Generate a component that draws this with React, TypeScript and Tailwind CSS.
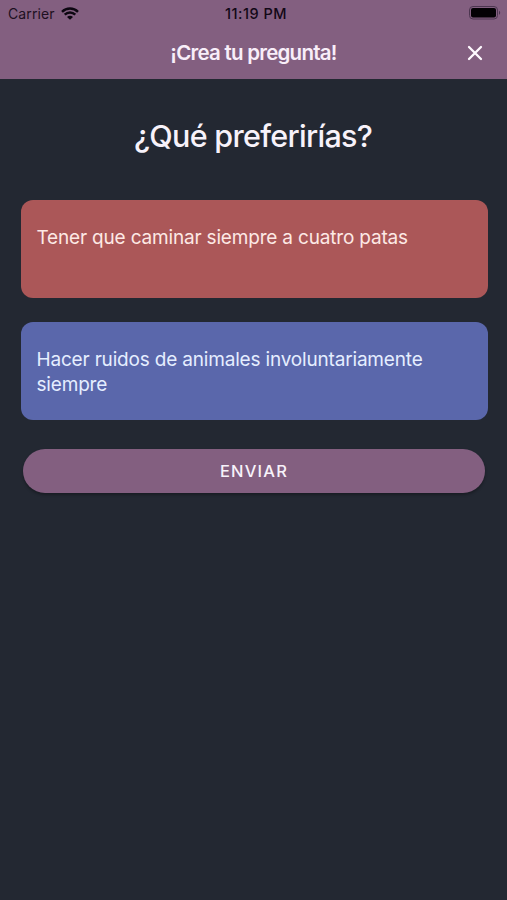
import React from "react";

function WifiIcon() {
  return (
    <svg width="18" height="13" viewBox="0 0 18 13" fill="none" stroke="#0d0711" strokeWidth="2.4">
      <path d="M1 4.8C5.4 0.4 12.6 0.4 17 4.8" />
      <path d="M3.7 7.7C6.7 4.8 11.3 4.8 14.3 7.7" />
      <path d="M6 9.9C7.7 8.4 10.3 8.4 12 9.9L9 12.8Z" fill="#0d0711" stroke="none" />
    </svg>
  );
}

function BatteryIcon() {
  return (
    <svg width="33" height="14" viewBox="0 0 33 14" fill="none">
      <rect x="0.5" y="0.5" width="28" height="12.5" rx="3.5" stroke="#4c3650" />
      <rect x="2" y="2" width="25" height="9.5" rx="2" fill="#030104" />
      <path d="M30 4.7C31.6 5.2 31.6 8.2 30 8.7Z" fill="#4c3650" />
    </svg>
  );
}

function StatusBar() {
  return (
    <div className="grid h-[27px] grid-cols-3 items-center pl-[8px] pr-[5px] text-[#1d1021]">
      <div className="flex items-center gap-[6.5px]">
        <span className="text-[14px] leading-[27px] tracking-[0.1px]">Carrier</span>
        <WifiIcon />
      </div>
      <span className="pl-[2px] text-center text-[14.5px] font-medium leading-[27px] tracking-[0.5px] text-[#120816]">
        11:19 PM
      </span>
      <div className="flex justify-end pb-px">
        <BatteryIcon />
      </div>
    </div>
  );
}

function Option({ text, tone }: { text: string; tone: string }) {
  return (
    <div className={`h-[98px] rounded-[12px] pl-4 pr-8 pt-[26px] text-[19px] leading-[24.5px] tracking-[-0.18px] ${tone}`}>
      {text}
    </div>
  );
}

export default function App() {
  return (
    <div className="flex h-[900px] w-[507px] flex-col overflow-hidden bg-[#232832] font-['Inter',sans-serif] text-[#f7f2fa]">
      <header className="h-[79px] bg-[#835f80]">
        <StatusBar />
        <div className="grid h-[52px] grid-cols-[60px_1fr_60px] items-center">
          <h1 className="col-start-2 text-center text-[20.5px] font-semibold leading-[24px] tracking-[-0.75px] text-[#f8eef9]">
            ¡Crea tu pregunta!
          </h1>
          <button className="flex justify-center pr-[5px]" aria-label="Cerrar">
            <svg width="16" height="16" viewBox="0 0 16 16" stroke="#fffaff" strokeWidth="2.3" strokeLinecap="round">
              <path d="M2 2L14 14M14 2L2 14" />
            </svg>
          </button>
        </div>
      </header>
      <main className="flex flex-col pl-[20.5px] pr-[19.5px] pt-[37px]">
        <h2 className="mb-[43px] pb-[2px] pr-[2px] text-center text-[30.5px] font-medium leading-[39px] tracking-[-0.7px]">
          ¿Qué preferirías?
        </h2>
        <div className="flex flex-col gap-6">
          <Option text="Tener que caminar siempre a cuatro patas" tone="bg-[#ab5758] text-[#fde9e5]" />
          <Option text="Hacer ruidos de animales involuntariamente siempre" tone="bg-[#5a67ab] text-[#e5eeff]" />
        </div>
        <button className="mx-[2.5px] mt-[29px] h-[44px] rounded-full bg-[#835f80] pt-px text-[16.5px] font-medium tracking-[1.2px] shadow-[0_2px_3px_rgba(0,0,0,0.3)]">
          ENVIAR
        </button>
      </main>
    </div>
  );
}
